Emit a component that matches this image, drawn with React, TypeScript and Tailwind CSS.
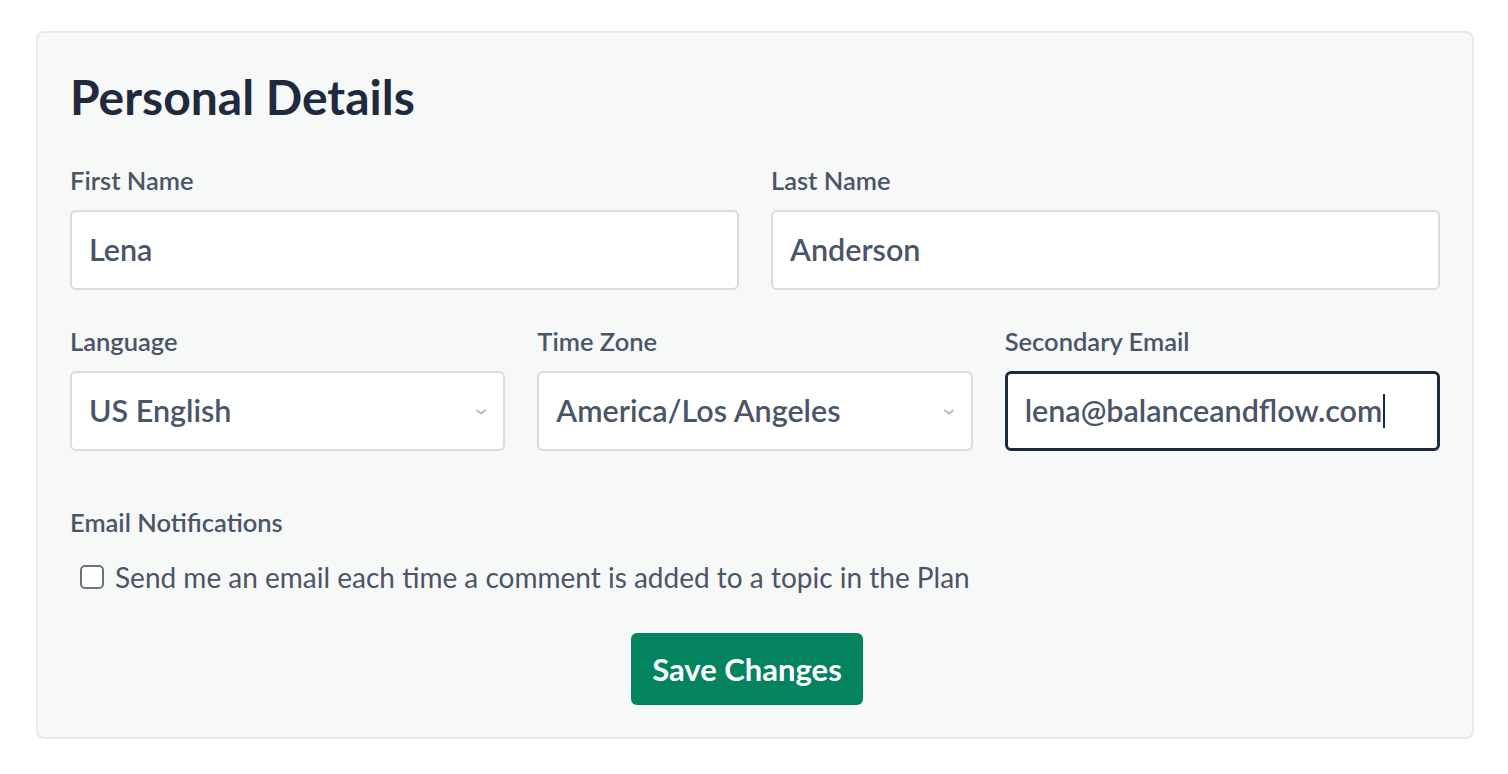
import React from 'react';

const Label = ({ children }: { children: React.ReactNode }) => (
  <label className="block text-[25.5px] leading-[28px] font-semibold text-[#4a5568]">{children}</label>
);

const TextInput = ({ value, focused }: { value: string; focused?: boolean }) => (
  <div
    className={
      focused
        ? 'mt-[16px] h-[80px] rounded-[6px] border-[3px] border-[#1f2a3f] bg-white px-[17px] flex items-center'
        : 'mt-[16px] h-[80px] rounded-[6px] border-2 border-[#d9dcdf] bg-white px-[17px] flex items-center'
    }
  >
    <span className="text-[30.5px] font-semibold text-[#4a5568]">{value}</span>
    {focused && <span className="ml-[1px] h-[34px] w-[2px] bg-[#1f2a3f]" />}
  </div>
);

const SelectInput = ({ value }: { value: string }) => (
  <div className="mt-[16px] h-[80px] rounded-[6px] border-2 border-[#d9dcdf] bg-white pl-[17px] pr-[16px] flex items-center justify-between">
    <span className="text-[30.5px] font-semibold text-[#4a5568]">{value}</span>
    <svg width="12" height="8" viewBox="0 0 12 8" fill="none" className="mt-[2px]">
      <path d="M2 2.5 L6 5.5 L10 2.5" stroke="#b3bac4" strokeWidth="2" strokeLinecap="round" strokeLinejoin="round" />
    </svg>
  </div>
);

const App: React.FC = () => {
  return (
    <div className="min-h-screen bg-white pt-[31px] pl-[36px]" style={{ fontFamily: 'Lato, "Open Sans", sans-serif' }}>
      <div className="w-[1438px] rounded-[8px] border-2 border-[#e8eaea] bg-[#f7f8f8] px-[32px] pt-[38px] pb-[32px]">
        <h2 className="text-[48px] leading-[52px] font-bold text-[#1f2a3f]">Personal Details</h2>

        <div className="mt-[43px] grid grid-cols-2 gap-x-[32px]">
          <div>
            <Label>First Name</Label>
            <TextInput value="Lena" />
          </div>
          <div>
            <Label>Last Name</Label>
            <TextInput value="Anderson" />
          </div>
        </div>

        <div className="mt-[37px] grid grid-cols-3 gap-x-[32px]">
          <div>
            <Label>Language</Label>
            <SelectInput value="US English" />
          </div>
          <div>
            <Label>Time Zone</Label>
            <SelectInput value="America/Los Angeles" />
          </div>
          <div>
            <Label>Secondary Email</Label>
            <TextInput value="lena@balanceandflow.com" focused />
          </div>
        </div>

        <div className="mt-[57px]">
          <Label>Email Notifications</Label>
          <div className="mt-[25px] flex items-center gap-[11px] pl-[10px]">
            <span className="h-[24px] w-[24px] rounded-[5px] border-2 border-[#6b7280] bg-white" />
            <span className="text-[28px] leading-[32px] text-[#4a5568]">
              Send me an email each time a comment is added to a topic in the Plan
            </span>
          </div>
        </div>

        <div className="mt-[40px] flex justify-center pr-[16px]">
          <button className="h-[72px] w-[232px] rounded-[6px] bg-[#03845e] text-[31px] font-bold text-white">
            Save Changes
          </button>
        </div>
      </div>
    </div>
  );
};

export default App;
